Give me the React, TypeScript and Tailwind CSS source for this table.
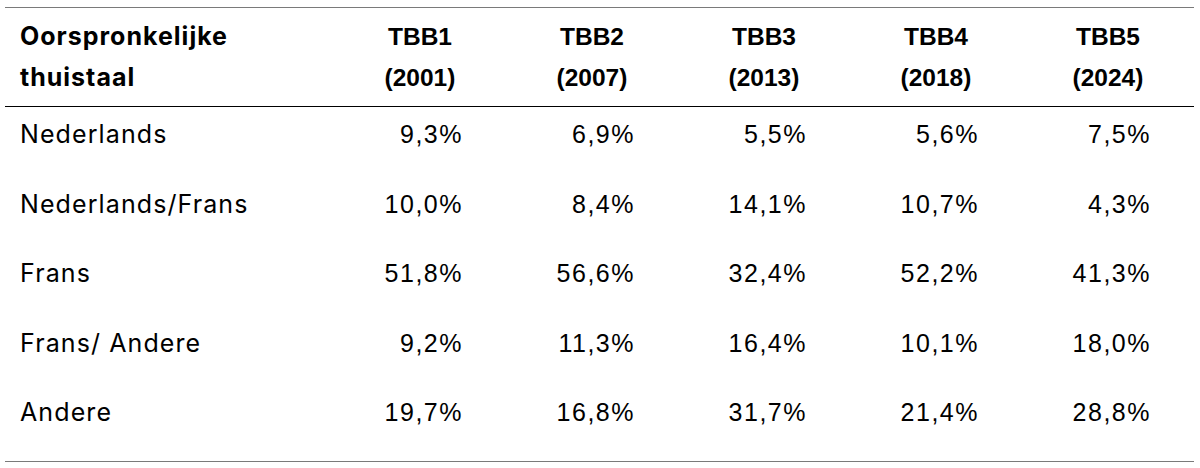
const columns = [
  { label: "TBB1", year: "(2001)" },
  { label: "TBB2", year: "(2007)" },
  { label: "TBB3", year: "(2013)" },
  { label: "TBB4", year: "(2018)" },
  { label: "TBB5", year: "(2024)" },
];

const rows = [
  { lang: "Nederlands", values: ["9,3%", "6,9%", "5,5%", "5,6%", "7,5%"] },
  { lang: "Nederlands/Frans", values: ["10,0%", "8,4%", "14,1%", "10,7%", "4,3%"] },
  { lang: "Frans", values: ["51,8%", "56,6%", "32,4%", "52,2%", "41,3%"] },
  { lang: "Frans/ Andere", values: ["9,2%", "11,3%", "16,4%", "10,1%", "18,0%"] },
  { lang: "Andere", values: ["19,7%", "16,8%", "31,7%", "21,4%", "28,8%"] },
];

function App() {
  return (
    <div className="w-[1200px] h-[468px] bg-white pt-[7px] px-[5px] text-black">
      <div className="w-[1189px] border-t border-b border-[#7a7a7a]">
        <div className="grid grid-cols-[329px_repeat(5,172px)] border-b border-black pt-[8px] pb-[8px]">
          <div className="pl-[15px] font-['Inter',sans-serif] font-bold text-[25px] leading-[41px] tracking-[1px]">
            Oorspronkelijke
            <br />
            thuistaal
          </div>
          {columns.map((c) => (
            <div
              key={c.label}
              className="flex flex-col items-center font-['Liberation_Sans',Arial,sans-serif] font-bold text-[24.5px] leading-[41px]"
            >
              <span>{c.label}</span>
              <span>{c.year}</span>
            </div>
          ))}
        </div>

        <div className="pb-[6.5px]">
          {rows.map((r) => (
            <div
              key={r.lang}
              className="grid grid-cols-[329px_repeat(5,172px)] h-[69.5px] pt-[7px]"
            >
              <div className="pl-[15px] font-['Inter',sans-serif] text-[25px] leading-[41px] tracking-[1.1px]">
                {r.lang}
              </div>
              {r.values.map((v, i) => (
                <div
                  key={i}
                  className="text-right pr-[43px] font-['Liberation_Sans',Arial,sans-serif] text-[25px] leading-[41px] tracking-[1.5px]"
                >
                  {v}
                </div>
              ))}
            </div>
          ))}
        </div>
      </div>
    </div>
  );
}

export default App;
